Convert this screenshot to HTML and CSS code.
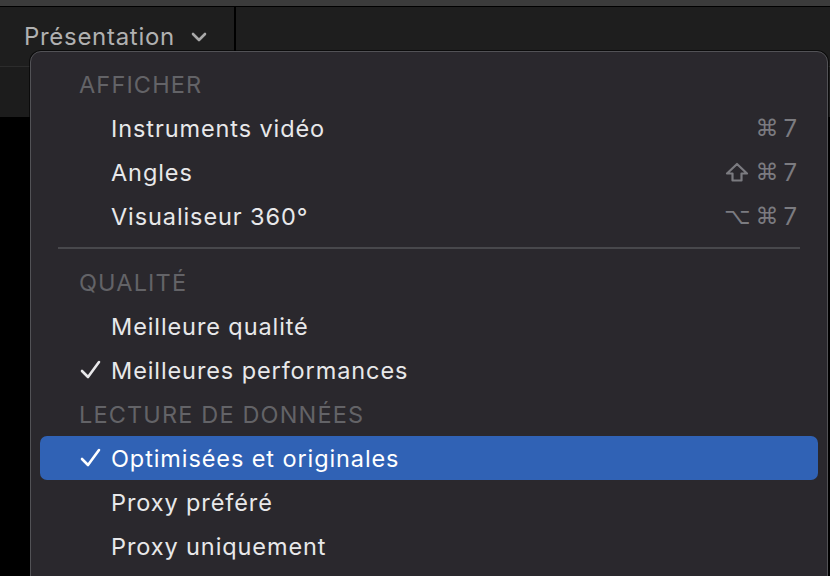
FILE: index.html
```html
<!DOCTYPE html>
<html lang="fr">
<head>
<meta charset="utf-8">
<title>Présentation</title>
<link rel="stylesheet" href="styles.css">
</head>
<body>
<div class="app">
  <div class="topband"></div>
  <div class="toolbar">
    <div class="view-btn">
      <span class="view-label">Présentation</span>
      <svg class="chev" width="16" height="10" viewBox="0 0 16 10"><polyline points="2,2 8,8 14,2" fill="none" stroke="#a9a9a9" stroke-width="2.6" stroke-linecap="round" stroke-linejoin="round"/></svg>
    </div>
    <div class="divider"></div>
    <div class="toolbar-rest"></div>
  </div>
  <div class="subbar"></div>
  <div class="viewer"></div>

  <div class="menu">
    <div class="row header">AFFICHER</div>
    <div class="row item"><span class="check"></span><span class="label">Instruments vidéo</span><span class="sc"><span class="g">⌘</span>7</span></div>
    <div class="row item"><span class="check"></span><span class="label">Angles</span><span class="sc"><svg class="shift" width="24" height="20" viewBox="0 0 24 20"><path d="M12 2 L22 11.5 H16.5 V18.5 H7.5 V11.5 H2 Z" fill="none" stroke="#7b7b80" stroke-width="2.2" stroke-linejoin="round"/></svg><span class="g">⌘</span>7</span></div>
    <div class="row item"><span class="check"></span><span class="label">Visualiseur 360°</span><span class="sc"><span class="g">⌥</span><span class="g">⌘</span>7</span></div>
    <div class="sep"><div class="sep-line"></div></div>
    <div class="row header">QUALITÉ</div>
    <div class="row item"><span class="check"></span><span class="label">Meilleure qualité</span></div>
    <div class="row item"><span class="check"><svg width="22" height="20" viewBox="0 0 22 20"><polyline points="2,11 8,17 19,2" fill="none" stroke="#e8e8ea" stroke-width="2.6" stroke-linecap="round" stroke-linejoin="round"/></svg></span><span class="label">Meilleures performances</span></div>
    <div class="row header">LECTURE DE DONNÉES</div>
    <div class="row item selected"><span class="check"><svg width="22" height="20" viewBox="0 0 22 20"><polyline points="2,11 8,17 19,2" fill="none" stroke="#ffffff" stroke-width="2.6" stroke-linecap="round" stroke-linejoin="round"/></svg></span><span class="label">Optimisées et originales</span></div>
    <div class="row item"><span class="check"></span><span class="label">Proxy préféré</span></div>
    <div class="row item"><span class="check"></span><span class="label">Proxy uniquement</span></div>
  </div>
</div>
</body>
</html>
```

FILE: styles.css
```css
* { box-sizing: border-box; }
html, body { margin: 0; padding: 0; }
body {
  width: 830px;
  height: 576px;
  overflow: hidden;
  background: #000;
  font-family: Inter, "Noto Sans", sans-serif;
}
.app {
  position: relative;
  width: 830px;
  height: 576px;
  overflow: hidden;
  display: flex;
  flex-direction: column;
}
.topband {
  flex: none;
  height: 7px;
  background: #3b3b3b;
  border-bottom: 1px solid #000;
}
.toolbar {
  height: 59px;
  flex: none;
  display: flex;
  background: #1e1e1e;
}
.view-btn {
  width: 234px;
  display: flex;
  align-items: flex-start;
  padding: 15px 0 0 24px;
  gap: 16px;
}
.view-label {
  font-size: 24px;
  line-height: 30px;
  color: #b1b1b1;
  letter-spacing: 0.7px;
}
.chev { margin-top: 10px; }
.divider {
  width: 2px;
  height: 45px;
  background: #000;
}
.toolbar-rest { flex: 1; }
.subbar {
  height: 51px;
  flex: none;
  background: #1c1c1c;
  border-top: 1px solid #2c2c2c;
}
.viewer { flex: 1; background: #000; }

.menu {
  position: absolute;
  left: 30px;
  top: 51px;
  width: 798px;
  height: 560px;
  background: #2a282d;
  border: 1.5px solid #525256;
  border-radius: 11px;
  padding: 9.5px 9px;
  box-shadow: 0 0 0 1px rgba(0,0,0,0.6);
}
.row {
  height: 44px;
  display: flex;
  align-items: center;
  padding-top: 1px;
}
.header {
  padding-left: 39px;
  font-size: 23.5px;
  color: #636367;
  letter-spacing: 1.15px;
  padding-top: 2px;
}
.item {
  color: #e8e8ea;
  font-size: 23.5px;
  padding-right: 21px;
  border-radius: 7px;
}
.check {
  width: 71px;
  flex: none;
  display: flex;
  align-items: center;
  padding-left: 40px;
}
.label { flex: 1; letter-spacing: 0.9px; }
.sc {
  color: #7b7b80;
  display: flex;
  align-items: center;
  gap: 5px;
  font-size: 24px;
}
.g {
  font-family: "DejaVu Sans", sans-serif;
  font-size: 23px;
}
.shift { margin-right: 1px; }
.selected {
  background: #3062b5;
  color: #fff;
}
.sep {
  height: 22px;
  padding: 9px 18px 0 18px;
}
.sep-line {
  height: 2px;
  background: #48484c;
}
```
